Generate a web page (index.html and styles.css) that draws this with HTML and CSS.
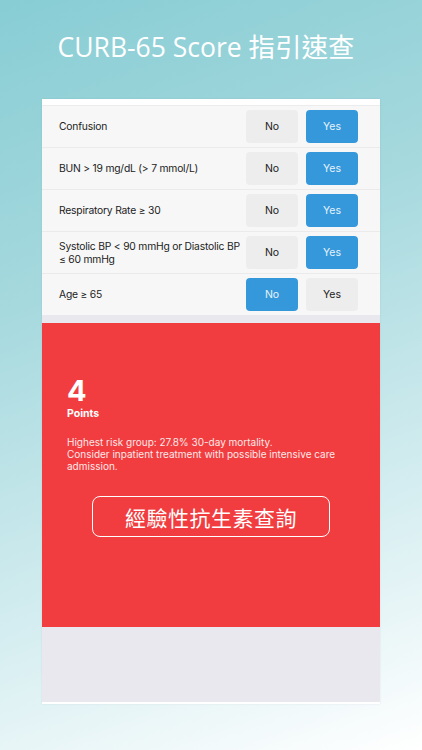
FILE: index.html
```html
<!DOCTYPE html>
<html lang="zh-Hant">
<head>
<meta charset="utf-8">
<link rel="stylesheet" href="styles.css">
</head>
<body>
<div class="screen">
  <h1 class="title">CURB-65 Score 指引速查</h1>
  <div class="panel">
    <div class="topstrip"></div>
    <div class="rows">
      <div class="row"><span class="label">Confusion</span><div class="btns"><span class="btn">No</span><span class="btn on">Yes</span></div></div>
      <div class="row"><span class="label">BUN &gt; 19 mg/dL (&gt; 7 mmol/L)</span><div class="btns"><span class="btn">No</span><span class="btn on">Yes</span></div></div>
      <div class="row"><span class="label">Respiratory Rate ≥ 30</span><div class="btns"><span class="btn">No</span><span class="btn on">Yes</span></div></div>
      <div class="row"><span class="label">Systolic BP &lt; 90 mmHg or Diastolic BP ≤ 60 mmHg</span><div class="btns"><span class="btn">No</span><span class="btn on">Yes</span></div></div>
      <div class="row"><span class="label">Age ≥ 65</span><div class="btns"><span class="btn on">No</span><span class="btn">Yes</span></div></div>
    </div>
    <div class="gap"></div>
    <div class="result">
      <div class="score">4</div>
      <div class="points">Points</div>
      <p class="desc">Highest risk group: 27.8% 30-day mortality.<br>Consider inpatient treatment with possible intensive care admission.</p>
      <div class="cta">經驗性抗生素查詢</div>
    </div>
    <div class="footer"></div>
  </div>
</div>
</body>
</html>
```
FILE: styles.css
```css
* { box-sizing: border-box; }
html, body { margin: 0; padding: 0; }
body {
  width: 422px;
  height: 750px;
  overflow: hidden;
  font-family: "Open Sans", "Noto Sans CJK TC", sans-serif;
}
.screen {
  width: 422px;
  height: 750px;
  background: linear-gradient(160deg, #88cdd4 0%, #a6d9de 35%, #d4edf0 70%, #ffffff 100%);
  display: flex;
  flex-direction: column;
  align-items: center;
}
.title {
  margin: 30px 10px 0 0;
  height: 69px;
  font-weight: 400;
  font-size: 26.5px;
  line-height: 34px;
  color: #fff;
  font-family: "Open Sans", "Noto Sans CJK TC", sans-serif;
}
.panel {
  width: 338px;
  display: flex;
  flex-direction: column;
  border-bottom: 2px solid #fff;
  box-shadow: 0 0 2px rgba(0,0,0,0.08);
}
.topstrip { height: 7px; background: #fff; border-bottom: 1px solid #ececec; }
.rows { background: #f7f7f7; font-family: "Inter", "Liberation Sans", sans-serif; }
.row {
  height: 42px;
  display: flex;
  align-items: center;
  padding: 0 22px 0 17px;
  border-bottom: 1px solid #ebebeb;
  color: #222;
}
.row:last-child { border-bottom: none; height: 41px; }
.label {
  flex: 1;
  font-size: 10.3px;
  line-height: 13px;
  letter-spacing: -0.2px;
  padding-right: 0;
}
.btns { display: flex; gap: 8px; }
.btn {
  width: 52px;
  height: 33px;
  border-radius: 4px;
  background: #ededed;
  display: flex;
  align-items: center;
  justify-content: center;
  font-size: 10.5px;
  color: #222;
}
.btn.on { background: #3498db; color: #e8f3fb; }
.gap { height: 8px; background: #e9e8ee; }
.result {
  height: 304px;
  background: #f23d40;
  padding: 52px 25px 0;
  color: #fff;
  display: flex;
  flex-direction: column;
  font-family: "Inter", "Liberation Sans", sans-serif;
}
.score { font-size: 29px; font-weight: 700; line-height: 32px; }
.points { font-size: 10.5px; font-weight: 700; margin-top: 0; line-height: 14px; }
.desc {
  margin: 15px 0 0;
  font-size: 10px;
  line-height: 12px;
  color: #fde8e8;
}
.cta {
  margin: 24px 0 0 25px;
  width: 238px;
  height: 41px;
  border: 1.5px solid #fff;
  border-radius: 8px;
  display: flex;
  align-items: center;
  justify-content: center;
  font-family: "Noto Sans CJK TC", sans-serif;
  font-size: 21px;
  font-weight: 400;
  letter-spacing: 0.5px;
}
.footer { height: 75px; background: #e9e8ee; }
```
